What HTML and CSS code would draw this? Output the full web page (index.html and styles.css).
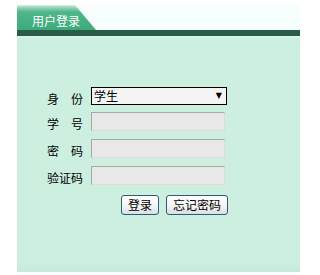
FILE: index.html
```html
<!DOCTYPE html>
<html lang="zh-CN">
<head>
<meta charset="utf-8">
<title>用户登录</title>
<link rel="stylesheet" href="styles.css">
</head>
<body>
<div class="panel">
  <div class="header">
    <div class="tab">用户登录</div>
  </div>
  <div class="bar"></div>
  <div class="strip"></div>
  <form class="form">
    <div class="row row-select">
      <span class="label">身　份</span>
      <div class="select"><span>学生</span><span class="arrow">▼</span></div>
    </div>
    <div class="row">
      <span class="label">学　号</span>
      <div class="input"></div>
    </div>
    <div class="row">
      <span class="label">密　码</span>
      <div class="input"></div>
    </div>
    <div class="row">
      <span class="label">验证码</span>
      <div class="input"></div>
    </div>
    <div class="buttons">
      <span class="btn">登录</span>
      <span class="btn">忘记密码</span>
    </div>
  </form>
</div>
</body>
</html>
```
FILE: styles.css
```css
html, body {
  margin: 0;
  padding: 0;
  background: #ffffff;
}
body {
  font-family: "Noto Sans CJK SC", "DejaVu Sans", sans-serif;
  font-size: 12px;
  color: #000;
}
.panel {
  margin: 5px 0 0 17px;
  width: 283px;
  height: 267px;
  background: linear-gradient(#ccefe0 0, #ccefe0 96%, #c4eada 100%);
  display: flex;
  flex-direction: column;
}
.header {
  height: 25px;
  background: #f6fffd;
  display: flex;
}
.tab {
  width: 79px;
  height: 25px;
  box-sizing: border-box;
  padding: 9px 0 0 15px;
  line-height: 14px;
  color: #ffffff;
  background: linear-gradient(#d6efe4 0, #8fd0b2 3px, #4fb68a 7px, #3daa7b 100%);
  clip-path: polygon(0 0, 58px 0, 79px 100%, 0 100%);
}
.bar {
  height: 6px;
  background: #2a5d47;
}
.strip {
  height: 2px;
  background: #daf3e8;
}
.form {
  margin: 49px 0 0 30px;
  display: flex;
  flex-direction: column;
}
.row {
  display: flex;
  align-items: center;
  height: 19px;
  margin-bottom: 8px;
}
.row-select {
  height: 18px;
  margin-bottom: 7px;
}
.label {
  width: 36px;
  margin-right: 8px;
  padding-top: 5px;
  line-height: 14px;
  white-space: nowrap;
}
.select {
  width: 136px;
  height: 18px;
  box-sizing: border-box;
  border: 1px solid #000;
  background: #f4f4f4;
  display: flex;
  justify-content: space-between;
  align-items: center;
  padding: 0 4px 0 2px;
  line-height: 14px;
}
.arrow {
  font-family: "DejaVu Sans", sans-serif;
  font-size: 8px;
}
.input {
  width: 134px;
  height: 19px;
  box-sizing: border-box;
  border: 1px solid #a8a8a8;
  border-right-color: #dcdcdc;
  border-bottom-color: #dcdcdc;
  background: #e8e8e8;
}
.buttons {
  display: flex;
  gap: 7px;
  margin: 2px 0 0 74px;
}
.btn {
  height: 20px;
  box-sizing: border-box;
  padding: 0 6px;
  line-height: 18px;
  border: 1px solid #2f5b7a;
  border-radius: 3px;
  background: linear-gradient(#ffffff, #f4f4f4 55%, #d9dee3);
}
```
